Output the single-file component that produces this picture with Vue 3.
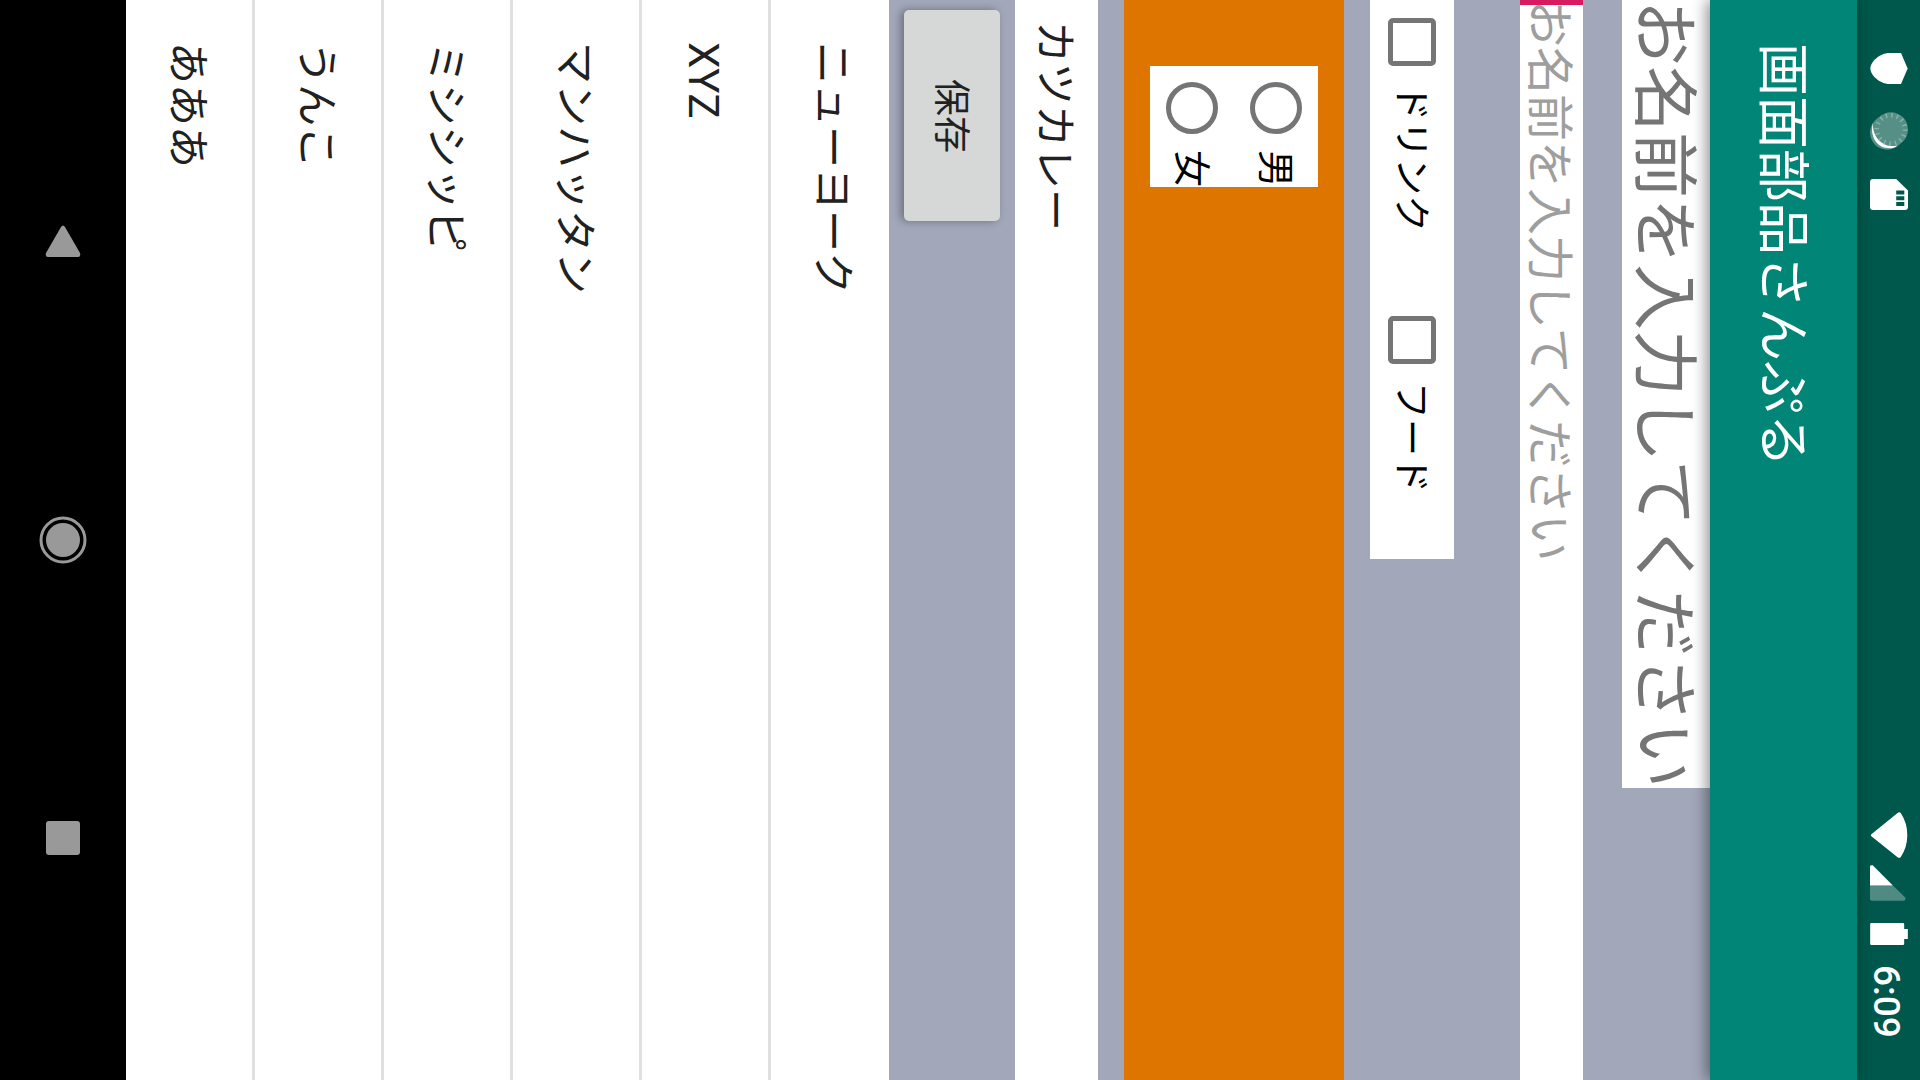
<script setup>
import { ref } from 'vue'

const name = ref('')
const options = ref([
  { id: 'drink', label: 'ドリンク', checked: false },
  { id: 'food', label: 'フード', checked: false },
])
const gender = ref('')
const genders = [
  { id: 'male', label: '男' },
  { id: 'female', label: '女' },
]
const menu = ref('カツカレー')
const places = ['ニューヨーク', 'XYZ', 'マンハッタン', 'ミシシッピ', 'うんこ', 'あああ']
</script>

<template>
  <div class="screen">
    <header class="status">
      <svg class="icon shield" viewBox="540 158 113 94" aria-hidden="true">
        <path fill="#fff" d="M653 205 633 158H597C570 158 540 184 540 205S570 252 597 252H633Z" />
      </svg>
      <svg class="icon sync" viewBox="540 337 113 113" aria-hidden="true">
        <circle cx="591" cy="398" r="51" fill="#fff" fill-opacity=".35" />
        <circle cx="602" cy="389" r="51" fill="#558f86" />
        <path fill="#fff" d="M549 369C538 405 558 444 596 445 606 445 615 442 621 437 580 446 545 412 549 369Z" />
        <circle cx="602" cy="389" r="42" fill="none" stroke="#8db3ad" stroke-width="14" stroke-dasharray="4 12.5" />
      </svg>
      <svg class="icon card" viewBox="540 537 113 92" aria-hidden="true">
        <path
          fill="#fff"
          fill-rule="evenodd"
          d="M549 537H618L653 571V620Q653 629 644 629H549Q540 629 540 620V546Q540 537 549 537ZM618 571V583H642V571ZM618 588V600H642V588ZM618 605V617H642V605Z"
        />
      </svg>
      <span class="spacer"></span>
      <svg class="icon wifi" viewBox="540 96 113 137" aria-hidden="true">
        <path fill="#fff" d="M544 162 622 99Q628 94 632 100 651 129 651 165 651 200 632 229 628 235 622 231L544 168Q541 165 544 162Z" />
      </svg>
      <svg class="icon signal" viewBox="540 254 113 107" aria-hidden="true">
        <path fill="#4f8b82" d="M540 315H608L644 350Q648 360 640 360H545Q540 360 540 355Z" />
        <path fill="#fff" d="M540 315V258Q541 254 548 255L608 315Z" />
      </svg>
      <svg class="icon battery" viewBox="540 429 113 66" aria-hidden="true">
        <path fill="#fff" d="M544 429H638Q642 429 642 433V447H653V477H642V491Q642 495 638 495H544Q540 495 540 491V433Q540 429 544 429Z" />
      </svg>
      <time class="clock">6:09</time>
    </header>

    <div class="appbar">
      <h1>画面部品さんぷる</h1>
    </div>

    <main class="content">
      <label class="caption" for="name">お名前を入力してください</label>
      <div class="field">
        <input id="name" v-model="name" type="text" placeholder="お名前を入力してください" />
        <span class="caret"></span>
      </div>

      <div class="checks">
        <label v-for="o in options" :key="o.id" class="choice check" :for="o.id">
          <input :id="o.id" v-model="o.checked" type="checkbox" />
          <span>{{ o.label }}</span>
        </label>
      </div>

      <div class="band">
        <div class="radios" role="radiogroup">
          <label v-for="g in genders" :key="g.id" class="choice" :for="g.id">
            <input :id="g.id" v-model="gender" type="radio" name="gender" :value="g.id" />
            <span>{{ g.label }}</span>
          </label>
        </div>
      </div>

      <select v-model="menu" class="menu" aria-label="カツカレー">
        <option>カツカレー</option>
      </select>

      <div class="actions">
        <button class="save" type="button">保存</button>
      </div>

      <ul class="places">
        <li v-for="p in places" :key="p">{{ p }}</li>
      </ul>
    </main>

    <nav class="nav">
      <button type="button" aria-label="戻る">
        <svg viewBox="0 0 48 48"><path fill="#999" d="M22 9Q24 6 26 9L41 35Q42 39 39 39H9Q6 39 7 35Z" /></svg>
      </button>
      <button type="button" aria-label="ホーム">
        <svg viewBox="0 0 48 48">
          <circle cx="24" cy="24" r="17" fill="#999" />
          <circle cx="24" cy="24" r="22" fill="none" stroke="#999" stroke-width="3" />
        </svg>
      </button>
      <button type="button" aria-label="履歴">
        <svg viewBox="0 0 48 48"><rect x="7" y="7" width="34" height="34" rx="3" fill="#999" /></svg>
      </button>
    </nav>
  </div>
</template>

<style>
body {
  margin: 0;
  overflow: hidden;
}
</style>

<style scoped>
/* The device is held on its side: lines run downwards and blocks stack right to left. */
.screen {
  writing-mode: vertical-rl;
  text-orientation: sideways;
  display: flex;
  flex-direction: column;
  inline-size: 100vh;
  block-size: 100vw;
  overflow: hidden;
  background: #a2a8ba;
  color: #212121;
  font-family: Roboto, "Noto Sans CJK JP", sans-serif;
  font-size: 42px;
}

.screen * {
  box-sizing: border-box;
}

input,
select,
button {
  appearance: none;
  margin: 0;
  padding: 0;
  border: 0;
  border-radius: 0;
  outline: none;
  background: none;
  color: inherit;
  font: inherit;
  writing-mode: inherit;
  text-orientation: inherit;
}

.status {
  flex: none;
  display: flex;
  align-items: center;
  block-size: 63px;
  padding-inline: 53px 42px;
  background: #00574b;
  color: #fff;
}

.icon {
  flex: none;
  width: 38px;
}

.shield {
  height: 31px;
}

.sync {
  height: 38px;
  margin-inline: 28px 29px;
}

.card {
  height: 31px;
}

.spacer {
  flex: 1;
}

.wifi {
  height: 46px;
}

.signal {
  height: 36px;
  margin-inline: 7px 22px;
}

.battery {
  height: 22px;
}

.clock {
  margin-inline-start: 20px;
  padding-block-start: 4px;
  font-size: 37px;
  font-weight: 500;
  line-height: 59px;
}

.appbar {
  flex: none;
  position: relative;
  z-index: 1;
  display: flex;
  align-items: center;
  block-size: 147px;
  padding-inline-start: 43px;
  background: #008577;
  box-shadow: -3px 0 14px rgba(0, 0, 0, 0.45);
}

h1 {
  margin: 0;
  padding-block-start: 4px;
  color: #fff;
  font-size: 53px;
  font-weight: 400;
  line-height: 63px;
}

.content {
  flex: 1;
  min-block-size: 0;
  display: flex;
  flex-direction: column;
  align-items: flex-start;
}

.caption {
  flex: none;
  padding-block-start: 6px;
  background: #fff;
  color: #757575;
  font-size: 66px;
  line-height: 82px;
  white-space: nowrap;
}

.field {
  flex: none;
  position: relative;
  inline-size: 100%;
  block-size: 63px;
  margin-block: 39px 66px;
  background: #fff;
}

.field input {
  display: block;
  inline-size: 100%;
  block-size: 100%;
  padding-block-start: 4px;
  font-size: 47px;
  line-height: 59px;
}

.field input::placeholder {
  color: #9e9e9e;
  opacity: 1;
}

.caret {
  position: absolute;
  inset-block: 0;
  inset-inline-start: 0;
  inline-size: 5px;
  background: #d81b60;
}

.checks {
  flex: none;
  display: flex;
  background: #fff;
}

.choice {
  display: flex;
  align-items: center;
  block-size: 84px;
  color: #000;
  font-size: 37px;
  line-height: 42px;
}

.choice span {
  padding-block-start: 4px;
}

.check {
  padding-inline-end: 66px;
}

.choice input {
  flex: none;
  width: 48px;
  height: 48px;
  margin-inline: 18px;
  border: 5px solid #757575;
  border-radius: 5px;
}

.choice input[type="radio"] {
  width: 52px;
  height: 52px;
  margin-inline: 16px;
  border-radius: 50%;
}

.choice input:checked {
  border-color: #d81b60;
  background: #d81b60;
}

.band {
  flex: none;
  display: flex;
  inline-size: 100%;
  margin-block: 26px;
  padding: 66px 26px;
  background: #de7500;
}

.radios {
  background: #fff;
}

.menu {
  flex: none;
  inline-size: 100%;
  block-size: 83px;
  padding-block-start: 4px;
  padding-inline-start: 21px;
  background: #fff;
  line-height: 79px;
}

.actions {
  flex: none;
  padding-block: 15px;
  padding-inline: 10px;
}

.save {
  display: block;
  inline-size: 211px;
  block-size: 96px;
  padding-block-end: 4px;
  border-radius: 5px;
  background: #d6d7d7;
  box-shadow: -3px 0 8px rgba(0, 0, 0, 0.35);
  font-size: 37px;
  text-align: center;
}

.places {
  flex: 1;
  min-block-size: 0;
  display: flex;
  flex-direction: column;
  justify-content: flex-end;
  inline-size: 100%;
  margin: 0;
  padding: 0;
  overflow: hidden;
  background: #fff;
  list-style: none;
}

.places li {
  flex: none;
  padding-block-start: 4px;
  padding-inline-start: 42px;
  line-height: 122px;
}

.places li + li {
  border-block-start: 3px solid #e0e0e0;
}

.nav {
  flex: none;
  display: flex;
  align-items: center;
  justify-content: center;
  gap: 250px;
  block-size: 126px;
  background: #000;
}

.nav button,
.nav svg {
  display: block;
  width: 48px;
  height: 48px;
}
</style>
